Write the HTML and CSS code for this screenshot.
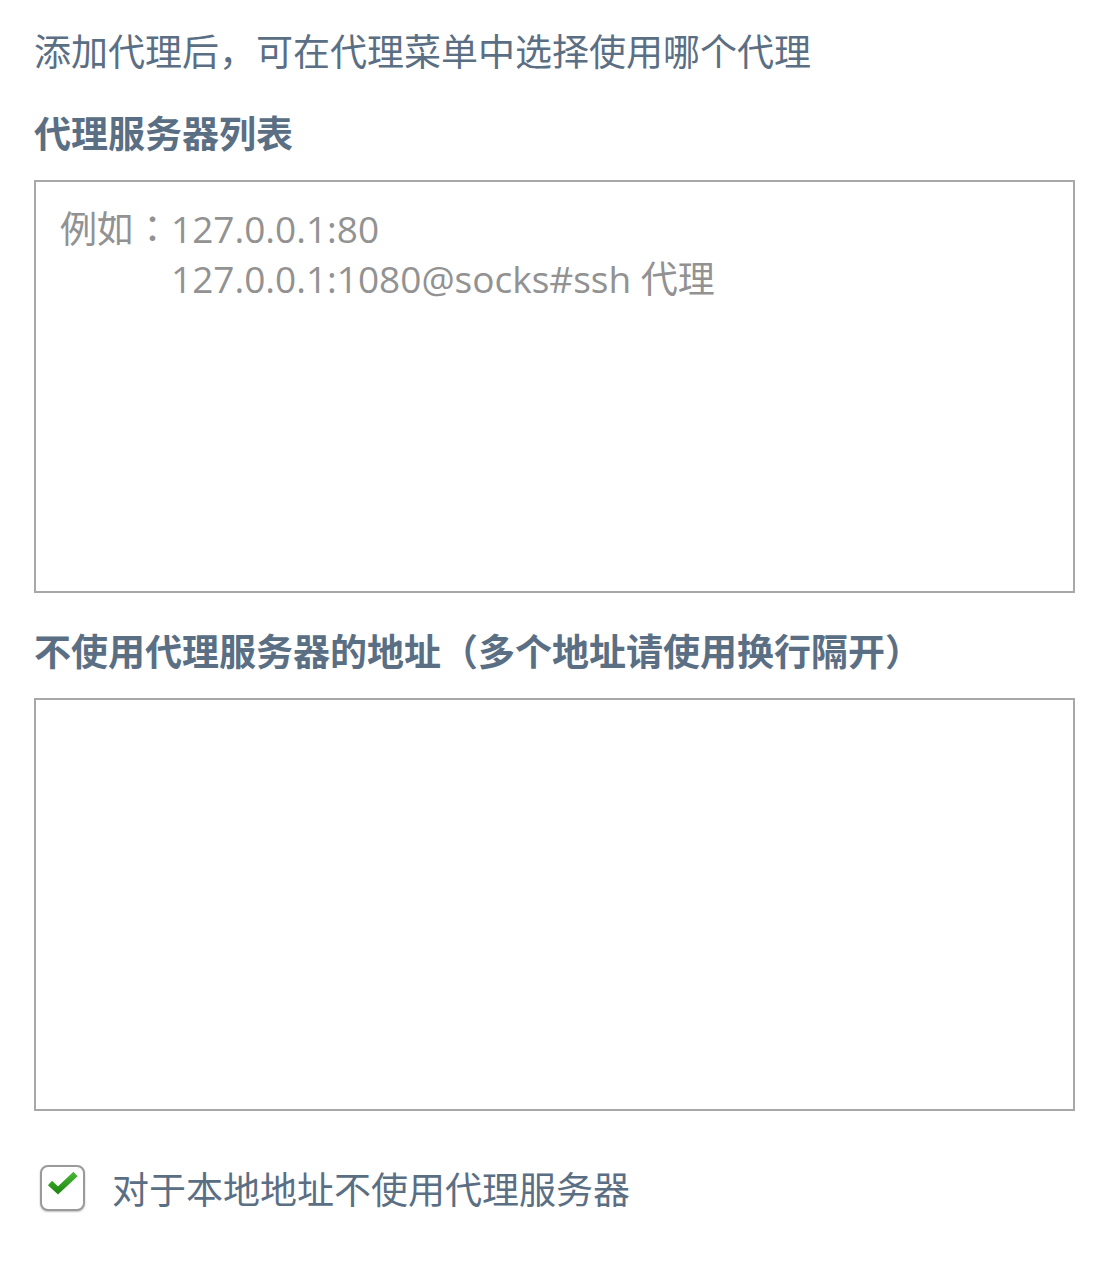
FILE: index.html
```html
<!DOCTYPE html>
<html lang="zh-CN">
<head>
<meta charset="utf-8">
<link rel="stylesheet" href="styles.css">
</head>
<body>
<div class="page">
  <p class="intro">添加代理后，可在代理菜单中选择使用哪个代理</p>
  <h2 class="heading">代理服务器列表</h2>
  <textarea class="box" lang="zh-TW" placeholder="例如：127.0.0.1:80
　　　127.0.0.1:1080@socks#ssh 代理"></textarea>
  <h2 class="heading heading-second">不使用代理服务器的地址<span class="punct" lang="zh-TW">（</span>多个地址请使用换行隔开<span class="punct" lang="zh-TW">）</span></h2>
  <textarea class="box"></textarea>
  <label class="check-row">
    <span class="check">
      <svg viewBox="0 0 34 26" width="34" height="26">
        <defs>
          <linearGradient id="g" x1="0" y1="0" x2="0" y2="1">
            <stop offset="0" stop-color="#45b532"/>
            <stop offset="1" stop-color="#238c16"/>
          </linearGradient>
        </defs>
        <path d="M4 13 L12 20.5 L29.5 4" fill="none" stroke="url(#g)" stroke-width="6" stroke-linejoin="miter" stroke-linecap="butt"/>
      </svg>
    </span>
    <span class="check-label">对于本地地址不使用代理服务器</span>
  </label>
</div>
</body>
</html>
```
FILE: styles.css
```css
html, body {
  margin: 0;
  padding: 0;
  background: #ffffff;
}
.page {
  padding: 25px 43px 0 34px;
  font-family: "Open Sans", "Noto Sans CJK SC", sans-serif;
  color: #5b6f84;
}
.intro {
  margin: 0;
  font-size: 37px;
  line-height: 50px;
  font-family: "Noto Sans CJK SC", sans-serif;
}
.punct {
  font-family: "Noto Sans CJK TC", sans-serif;
}
.heading {
  margin: 32px 0 0 0;
  font-size: 37px;
  line-height: 50px;
  font-weight: 700;
  font-family: "Noto Sans CJK SC", sans-serif;
}
.heading-second {
  margin-top: 32px;
}
.box {
  display: block;
  box-sizing: border-box;
  width: 1041px;
  height: 413px;
  margin: 23px 0 0 0;
  padding: 22px 24px 18px;
  border: 2px solid #a8a8a8;
  border-radius: 0;
  resize: none;
  outline: none;
  font-family: "Open Sans", "Noto Sans CJK TC", sans-serif;
  font-size: 37px;
  line-height: 50px;
  color: #555;
  background: #fff;
}
.box::placeholder {
  color: #929292;
  opacity: 1;
}
.check-row {
  display: flex;
  align-items: center;
  gap: 27px;
  margin-top: 52px;
  padding-left: 6px;
}
.check {
  box-sizing: border-box;
  width: 45px;
  height: 46px;
  border: 2px solid #9a9a9a;
  border-radius: 8px;
  background: #fff;
  box-shadow: 0 1px 2px rgba(0,0,0,0.25);
  display: flex;
  align-items: flex-start;
  justify-content: center;
  padding-top: 3px;
}
.check svg {
  display: block;
  flex: none;
}
.check-label {
  font-family: "Noto Sans CJK SC", sans-serif;
  font-size: 37px;
  line-height: 50px;
  color: #5b6f84;
}
```
